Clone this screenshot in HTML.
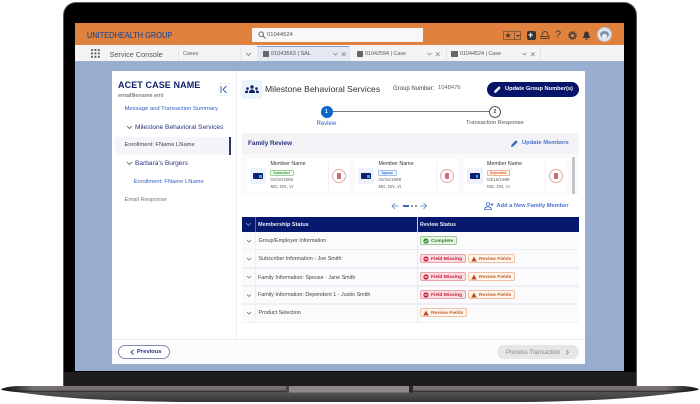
<!DOCTYPE html>
<html><head><meta charset="utf-8"><style>
*{box-sizing:border-box;margin:0;padding:0}
html,body{width:700px;height:404px;background:#fff;overflow:hidden;font-family:"Liberation Sans",sans-serif}
#w{position:relative;width:700px;height:404px;overflow:hidden;filter:blur(.3px)}
.a{position:absolute}
.t{position:absolute;white-space:nowrap;line-height:1}
.b{position:absolute;height:9px;border-radius:2px;font-size:4.900px;font-weight:700;line-height:9px;white-space:nowrap;padding-left:10px;border:1px solid}
.m{background:#fbdde2;border-color:#eba3ae;color:#c4203c}
.r{background:#fff6ef;border-color:#f0c0a0;color:#c2612a}
.c{background:#e9f6e6;border-color:#9acc99;color:#2f7d32}
.b svg{position:absolute;left:2px;top:.5px}
.row{position:absolute;left:242px;width:337px;height:17px;background:#fbfbfd}
.lab{position:absolute;left:258.500px;font-size:5.400px;color:#444;white-space:nowrap;line-height:1}
.card{position:absolute;top:158px;width:103px;height:35px;background:#fff;border-radius:2px}
.ic{position:absolute;left:3px;top:10px;width:16px;height:16px;background:#eff2fb;border-radius:2px}
.ic i{position:absolute;left:3px;top:5px;width:10px;height:6px;background:#0a1f6e;border-radius:1px}
.ic b{position:absolute;left:9px;top:6.500px;width:2.500px;height:3px;background:#3fa7d6}
.del{position:absolute;left:85px;top:11px;width:14px;height:14px;border-radius:50%;border:1px solid #e8a5ad;background:#fff}
.del i{position:absolute;left:4px;top:3px;width:4px;height:6px;background:#d06a77;border-radius:.5px}
.sep{position:absolute;left:81px;top:3px;width:1px;height:30px;background:#f1f1f4}
.tag{position:absolute;left:23px;top:12px;height:6px;border:1px solid;border-radius:1.500px;font-size:3.200px;line-height:4px;padding:0 2.500px;font-weight:700}
.n{left:23.500px;top:4px;font-size:5.300px;color:#333}
.d{left:23.500px;top:19.500px;font-size:4.500px;color:#666}
.e{left:23.500px;top:26.500px;font-size:4.500px;color:#666}
</style></head><body><div id="w">

<!-- laptop lid -->
<div class="a" style="left:63px;top:2px;width:574px;height:386px;background:#000;border-radius:13px 13px 0 0;border:1px solid #5a5b5f;border-bottom:0"></div>
<div class="a" style="left:64px;top:372px;width:572px;height:15px;background:#1f1c1e"></div>

<!-- base -->
<svg class="a" style="left:0;top:384px" width="700" height="20" viewBox="0 0 700 20">
<defs>
<linearGradient id="g" x1="0" x2="0" y1="0" y2="1"><stop offset="0" stop-color="#7a7677"/><stop offset=".26" stop-color="#716d6e"/><stop offset=".33" stop-color="#2c2a2b"/><stop offset=".4" stop-color="#565354"/><stop offset="1" stop-color="#363435"/></linearGradient>
<linearGradient id="l" x1="0" x2="1" y1="0" y2="0"><stop offset="0" stop-color="#111"/><stop offset=".4" stop-color="#1c1a1b" stop-opacity=".8"/><stop offset="1" stop-color="#1c1a1b" stop-opacity="0"/></linearGradient>
<linearGradient id="q" x1="1" x2="0" y1="0" y2="0"><stop offset="0" stop-color="#111"/><stop offset=".4" stop-color="#1c1a1b" stop-opacity=".8"/><stop offset="1" stop-color="#1c1a1b" stop-opacity="0"/></linearGradient>
</defs>
<path d="M1 5.500Q5 2.500 20 2H680Q695 2.500 699 5.500Q696 7 680 8.500Q620 17 520 18H180Q80 17 20 8.500Q4 7 1 5.500Z" fill="url(#g)"/>
<path d="M1 5.500Q5 2.500 20 2H34V8H20Q4 7 1 5.500Z" fill="url(#l)"/>
<path d="M699 5.500Q695 2.500 680 2H666V8H680Q696 7 699 5.500Z" fill="url(#q)"/>
<rect x="289" y="2" width="120" height="6.500" fill="#8e8a8b"/>
<rect x="286" y="2" width="3" height="6.500" fill="#4a4748"/>
<rect x="409" y="2" width="4" height="6.500" fill="#2a2729"/>
</svg>

<!-- screen -->
<div class="a" style="left:75px;top:23px;width:549px;height:348px;background:#98add0"></div>
<div class="a" style="left:75px;top:23px;width:549px;height:22px;background:#e0823d"></div>
<div class="t" style="left:87px;top:31px;font-size:8.600px;color:#2f4c8c;transform:scaleX(.86);transform-origin:0 0;text-shadow:0 0 .4px #2f4c8c">UNITEDHEALTH GROUP</div>
<div class="a" style="left:252px;top:28px;width:171px;height:14px;background:#f8f8f8;border-radius:1px"></div>
<svg class="a" style="left:258px;top:31px" width="8" height="8" viewBox="0 0 8 8" fill="none" stroke="#666"><circle cx="3.200" cy="3.200" r="2.300"/><path d="M5 5l2.500 2.500"/></svg>
<div class="t" style="left:267px;top:32px;font-size:5.800px;color:#555;margin-top:0.500px">01044524</div>

<!-- right header icons -->
<div class="a" style="left:503px;top:31px;width:18px;height:9px;border:1px solid #8b5a33;background:#e0823d"></div>
<div class="t" style="left:504.500px;top:31.500px;font-size:8px;color:#3a3a3a">★</div>
<div class="a" style="left:514px;top:31px;width:1px;height:9px;background:#8b5a33"></div>
<div class="a" style="left:516px;top:35px;border:2px solid transparent;border-top:2.500px solid #333"></div>
<div class="a" style="left:527px;top:31px;width:9px;height:9px;background:#333;border-radius:2px"></div>
<div class="t" style="left:528px;top:31px;font-size:9px;font-weight:700;color:#fff">+</div>
<svg class="a" style="left:540px;top:30px" width="10" height="10" viewBox="0 0 10 10" fill="none" stroke="#5a4430" stroke-width="1"><path d="M2 6C2 3 3 1.500 5 1.500S8 3 8 6"/><path d="M1 6.500H9V8.500H1z"/></svg>
<div class="t" style="left:555px;top:30px;font-size:11px;color:#4a3a2e">?</div>
<svg class="a" style="left:568px;top:31px" width="9" height="9" viewBox="0 0 9 9"><circle cx="4.500" cy="4.500" r="2.600" fill="none" stroke="#4a3a2e" stroke-width="1.600"/><circle cx="4.500" cy="4.500" r="4" fill="none" stroke="#4a3a2e" stroke-width="1" stroke-dasharray="1.300 1.200"/></svg>
<svg class="a" style="left:581.500px;top:31px" width="9" height="9" viewBox="0 0 9 9" fill="#3f3530"><path d="M4.500.5C6.500.5 7 2.500 7 4c0 1.500 1 2 1.500 3H.5C1 6 2 5.500 2 4 2 2.500 2.500.5 4.500.5z"/><rect x="3.500" y="7.500" width="2" height="1.300"/></svg>
<div class="a" style="left:597px;top:27px;width:15px;height:15px;border-radius:50%;background:#dfe6f0;border:1px solid #b8c6da"></div>
<div class="a" style="left:600px;top:31px;width:9px;height:7px;border-radius:50%;background:#7f90a8"></div>
<div class="a" style="left:602px;top:34px;width:5px;height:3.500px;border-radius:50%;background:#eef1f5"></div>

<!-- tab bar -->
<div class="a" style="left:75px;top:45px;width:549px;height:16px;background:#f4f4f6"></div>
<div class="a" style="left:91px;top:49px;width:9px;height:9px;background-image:radial-gradient(circle at 1px 1px,#555 1px,transparent 1.100px);background-size:3.400px 3.400px"></div>
<div class="t" style="left:109.500px;top:50.500px;font-size:7.300px;color:#555">Service Console</div>
<div class="a" style="left:178px;top:46px;width:1px;height:15px;background:#e8e8ea"></div>
<div class="t" style="left:183px;top:52px;font-size:5.400px;color:#666">Cases</div>
<div class="a" style="left:240px;top:46px;width:1px;height:15px;background:#e8e8ea"></div>
<svg class="a" style="left:245px;top:52px" width="7" height="5" fill="none" stroke="#777" stroke-width=".8"><path d="M1 1l2.500 2.500L6 1"/></svg>
<div class="a" style="left:257px;top:46px;width:92px;height:15px;background:#e3e8f2;border-top:1.500px solid #7f9bd2"></div>
<div class="a" style="left:349px;top:46px;width:1px;height:15px;background:#e4e4e8"></div>
<div class="a" style="left:446px;top:46px;width:1px;height:15px;background:#e4e4e8"></div>
<div class="a" style="left:540px;top:46px;width:1px;height:15px;background:#e4e4e8"></div>
<div class="a" style="left:263px;top:51px;width:6px;height:6px;background:#666;border-radius:.5px"></div>
<div class="t" style="left:271px;top:52px;font-size:5.600px;color:#555">01043563 | SAL</div>
<svg class="a" style="left:333px;top:52px" width="14" height="5" fill="none" stroke="#777" stroke-width=".7"><path d="M.5 1l2 2 2-2M9 .5l3.500 3.500M12.500 .5L9 4"/></svg>
<div class="a" style="left:357px;top:51px;width:6px;height:6px;background:#666;border-radius:.5px"></div>
<div class="t" style="left:365px;top:52px;font-size:5.400px;color:#555">01042594 | Case</div>
<svg class="a" style="left:427px;top:52px" width="14" height="5" fill="none" stroke="#777" stroke-width=".7"><path d="M.5 1l2 2 2-2M9 .5l3.500 3.500M12.500 .5L9 4"/></svg>
<div class="a" style="left:451px;top:51px;width:7px;height:6px;background:#666;border-radius:.5px"></div>
<div class="t" style="left:460px;top:52px;font-size:5.400px;color:#555">01044524 | Case</div>
<svg class="a" style="left:522px;top:52px" width="14" height="5" fill="none" stroke="#777" stroke-width=".7"><path d="M.5 1l2 2 2-2M9 .5l3.500 3.500M12.500 .5L9 4"/></svg>

<!-- main card -->
<div class="a" style="left:112px;top:71px;width:473px;height:293px;background:#fff;border-radius:1px"></div>
<div class="a" style="left:112px;top:339px;width:473px;height:25px;background:#fcfcfe;border-top:1px solid #eeeef3"></div>
<div class="a" style="left:236px;top:71px;width:1px;height:268px;background:#f0f0f4"></div>

<!-- sidebar -->
<div class="t" style="left:118px;top:81px;font-size:9px;font-weight:700;color:#0f1f6b;letter-spacing:.1px">ACET CASE NAME</div>
<div class="t" style="left:118px;top:94px;font-size:5.600px;color:#555">emailfilename.eml</div>
<div class="a" style="left:218px;top:83px;width:12px;height:13px;border:1px solid #eef0f6;background:#fff"></div>
<svg class="a" style="left:220px;top:85px" width="8" height="9" fill="none" stroke="#2b57b0" stroke-width=".9"><path d="M1 1v7M6.500 1L3 4.500 6.500 8"/></svg>
<div class="t" style="left:124.500px;top:107px;font-size:5.850px;color:#2f5fc4">Message and Transaction Summary</div>
<svg class="a" style="left:126px;top:125px" width="7" height="5" fill="none" stroke="#555" stroke-width=".8"><path d="M1 1l2.500 2.500L6 1"/></svg>
<div class="t" style="left:135px;top:124.500px;font-size:6.600px;color:#27337d">Milestone Behavioral Services</div>
<div class="a" style="left:115px;top:137px;width:115px;height:18px;background:#f3f5fb"></div>
<div class="a" style="left:229px;top:137px;width:2px;height:18px;background:#2a3570"></div>
<div class="t" style="left:124.500px;top:143px;font-size:5.800px;color:#444">Enrollment: FName LName</div>
<svg class="a" style="left:126px;top:161px" width="7" height="5" fill="none" stroke="#555" stroke-width=".8"><path d="M1 1l2.500 2.500L6 1"/></svg>
<div class="t" style="left:135px;top:161px;font-size:6.600px;color:#27337d">Barbara's Burgers</div>
<div class="t" style="left:133.500px;top:179.500px;font-size:5.800px;color:#2f5fc4">Enrollment: FName LName</div>
<div class="t" style="left:124.500px;top:198px;font-size:5.800px;color:#777">Email Response</div>

<!-- heading -->
<div class="a" style="left:242px;top:80px;width:20px;height:19px;background:#e8f3fa;border-radius:2px"></div>
<svg class="a" style="left:245px;top:85px" width="14" height="9" viewBox="0 0 14 9" fill="#0f1f6b"><circle cx="7" cy="2" r="1.700"/><path d="M4 8c0-2.500 1.500-3.500 3-3.500S10 5.500 10 8z"/><circle cx="2.500" cy="3.500" r="1.300"/><circle cx="11.500" cy="3.500" r="1.300"/><path d="M0 8c0-2 1-2.800 2.500-2.800L3.300 8zM14 8c0-2-1-2.800-2.500-2.800L10.700 8z"/></svg>
<div class="t" style="left:265px;top:85px;font-size:8.600px;color:#333">Milestone Behavioral Services</div>
<div class="t" style="left:393px;top:86px;font-size:6px;color:#444">Group Number:</div>
<div class="t" style="left:438px;top:86px;font-size:5.800px;color:#666">1048476</div>
<div class="a" style="left:487px;top:82px;width:92px;height:15px;border-radius:8px;background:#06146a"></div>
<svg class="a" style="left:493px;top:85px" width="9" height="9" fill="#fff"><path d="M1 8l.5-2.200L6 1.300 7.700 3 3.200 7.500z"/></svg>
<div class="t" style="left:505px;top:87px;font-size:5.700px;font-weight:700;color:#fff">Update Group Number(s)</div>

<!-- stepper -->
<div class="a" style="left:332px;top:111px;width:158px;height:1px;background:#777"></div>
<div class="a" style="left:320.500px;top:105.500px;width:12px;height:12px;border-radius:50%;background:#0a66c8"></div>
<div class="t" style="left:325px;top:109.500px;font-size:5px;font-weight:700;color:#fff">1</div>
<div class="t" style="left:316.500px;top:120.500px;font-size:6px;color:#2f5fc4">Review</div>
<div class="a" style="left:489px;top:105.500px;width:12px;height:12px;border-radius:50%;background:#fff;border:1px solid #555"></div>
<div class="t" style="left:493.500px;top:109.500px;font-size:5px;font-weight:700;color:#444">2</div>
<div class="t" style="left:466px;top:120.500px;font-size:5.800px;color:#555">Transaction Response</div>

<!-- family review -->
<div class="a" style="left:242px;top:133px;width:337px;height:21px;background:#f3f2f6;border-radius:3px 3px 0 0"></div>
<div class="t" style="left:248px;top:141px;font-size:6.400px;font-weight:700;color:#27337d">Family Review</div>
<svg class="a" style="left:510px;top:139px" width="9" height="9" fill="#3a67c4"><path d="M1 8l.5-2.200L6 1.300 7.700 3 3.200 7.500z"/></svg>
<div class="t" style="left:522px;top:141px;font-size:5.800px;font-weight:700;color:#3a67c4;opacity:.9">Update Members</div>
<div class="a" style="left:242px;top:154px;width:337px;height:41px;background:#fafafc"></div>
<div class="a" style="left:572px;top:157px;width:3px;height:37px;background:#c5c5c9"></div>

<div class="card" style="left:247px">
<div class="ic"><i></i><b></b></div>
<div class="t n">Member Name</div>
<div class="tag" style="color:#3a9a3a;border-color:#9ad09a;background:#f4fbf2">Subscriber</div>
<div class="t d">03/16/1998</div>
<div class="t e">MD, DN, VI</div>
<div class="sep"></div><div class="del"><i></i></div>
</div>
<div class="card" style="left:355px">
<div class="ic"><i></i><b></b></div>
<div class="t n">Member Name</div>
<div class="tag" style="color:#2f6fd0;border-color:#9dbdee;background:#f2f7ff">Spouse</div>
<div class="t d">03/16/1998</div>
<div class="t e">MD, DN, VI</div>
<div class="sep"></div><div class="del"><i></i></div>
</div>
<div class="card" style="left:463.500px">
<div class="ic"><i></i><b></b></div>
<div class="t n">Member Name</div>
<div class="tag" style="color:#d4622c;border-color:#edb390;background:#fff6f0">Dependent</div>
<div class="t d">03/16/1998</div>
<div class="t e">MD, DN, VI</div>
<div class="sep"></div><div class="del"><i></i></div>
</div>

<!-- pagination -->
<svg class="a" style="left:391px;top:202px" width="40" height="8" fill="none" stroke="#5a82d0" stroke-width=".8"><path d="M7.500 4H1M4 1L1 4l3 3M29 4h6.500M32.500 1l3 3-3 3"/><rect x="12" y="3" width="6" height="2" fill="#3a67c4" stroke="none"/><circle cx="21" cy="4" r="1" fill="#777" stroke="none"/><circle cx="25" cy="4" r="1" fill="#777" stroke="none"/></svg>
<svg class="a" style="left:484px;top:202px" width="10" height="8" fill="none" stroke="#3a67c4" stroke-width=".8"><circle cx="4" cy="2.200" r="1.700"/><path d="M.5 7.500C.5 5.500 2 4.800 4 4.800s3.500.7 3.500 2.700zM8 1v3M6.500 2.500h3"/></svg>
<div class="t" style="left:496.500px;top:204px;font-size:5.700px;font-weight:700;color:#3a67c4;opacity:.9">Add a New Family Member</div>

<!-- table -->
<div class="a" style="left:242px;top:217px;width:337px;height:15px;background:#06196e"></div>
<div class="a" style="left:255px;top:217px;width:1px;height:15px;background:#5d6aa5"></div>
<div class="a" style="left:417px;top:217px;width:1px;height:15px;background:#c8cde0"></div>
<svg class="a" style="left:245px;top:222px" width="7" height="5" fill="none" stroke="#8890b8" stroke-width=".8"><path d="M1 1l2.500 2.500L6 1"/></svg>
<div class="t" style="left:258px;top:222.500px;font-size:5.500px;font-weight:700;color:#e8eaf5">Membership Status</div>
<div class="t" style="left:420px;top:222.500px;font-size:5.300px;font-weight:700;color:#e8eaf5">Review Status</div>

<div class="row" style="top:232px"></div>
<div class="row" style="top:250px"></div>
<div class="row" style="top:268px"></div>
<div class="row" style="top:286px"></div>
<div class="row" style="top:304px"></div>
<div class="a" style="left:242px;top:249px;width:337px;height:1px;background:#f0f0f4"></div>
<div class="a" style="left:242px;top:267px;width:337px;height:1.500px;background:#efeff3"></div>
<div class="a" style="left:242px;top:285px;width:337px;height:1.500px;background:#efeff3"></div>
<div class="a" style="left:242px;top:303px;width:337px;height:1.500px;background:#efeff3"></div>
<div class="a" style="left:242px;top:322px;width:337px;height:1px;background:#f0f0f4"></div>
<div class="a" style="left:255px;top:232px;width:1px;height:90px;background:#eeeef2"></div>
<div class="a" style="left:417px;top:232px;width:1px;height:90px;background:#e8e8ee"></div>

<svg class="a" style="left:246px;top:239px" width="7" height="84" fill="none" stroke="#666" stroke-width=".7"><path d="M1 1l2 2 2-2M1 19l2 2 2-2M1 37l2 2 2-2M1 55.500l2 2 2-2M1 73l2 2 2-2"/></svg>
<div class="lab" style="top:239px">Group/Employer Information</div>
<div class="lab" style="top:257px">Subscriber Information - Joe Smith</div>
<div class="lab" style="top:275.500px;left:258px">Family Information: Spouse -  Jane Smith</div>
<div class="lab" style="top:293px;left:258px">Family Information: Dependent 1 -  Justin Smith</div>
<div class="lab" style="top:311px">Product Selection</div>

<div class="b c" style="left:420px;top:236px;width:37px"><svg width="6" height="6"><circle cx="3" cy="3" r="2.600" fill="#2e8b3a"/><path d="M1.500 3l1 1 2-2" stroke="#fff" stroke-width=".7" fill="none"/></svg>Complete</div>

<div class="b m" style="left:420px;top:254px;width:46px"><svg width="6" height="6"><circle cx="3" cy="3" r="2.600" fill="#c4203c"/><rect x="1.400" y="2.500" width="3.200" height="1" fill="#fff"/></svg>Field Missing</div>
<div class="b r" style="left:468px;top:254px;width:47px"><svg width="6" height="6"><path d="M3 .5L5.800 5.500H.2z" fill="#c2501a"/></svg>Review Fields</div>

<div class="b m" style="left:420px;top:272px;width:46px"><svg width="6" height="6"><circle cx="3" cy="3" r="2.600" fill="#c4203c"/><rect x="1.400" y="2.500" width="3.200" height="1" fill="#fff"/></svg>Field Missing</div>
<div class="b r" style="left:468px;top:272px;width:47px"><svg width="6" height="6"><path d="M3 .5L5.800 5.500H.2z" fill="#c2501a"/></svg>Review Fields</div>

<div class="b m" style="left:420px;top:290px;width:46px"><svg width="6" height="6"><circle cx="3" cy="3" r="2.600" fill="#c4203c"/><rect x="1.400" y="2.500" width="3.200" height="1" fill="#fff"/></svg>Field Missing</div>
<div class="b r" style="left:468px;top:290px;width:47px"><svg width="6" height="6"><path d="M3 .5L5.800 5.500H.2z" fill="#c2501a"/></svg>Review Fields</div>

<div class="b r" style="left:420px;top:308px;width:47px"><svg width="6" height="6"><path d="M3 .5L5.800 5.500H.2z" fill="#c2501a"/></svg>Review Fields</div>

<!-- footer -->
<div class="a" style="left:118px;top:344.500px;width:52px;height:14px;border-radius:7px;border:1px solid #8089b5;background:#fff"></div>
<svg class="a" style="left:130px;top:349px" width="5" height="7" fill="none" stroke="#27337d" stroke-width=".9"><path d="M3.500 1L1 3.200l2.500 2.300"/></svg>
<div class="t" style="left:137px;top:349.500px;font-size:5.800px;font-weight:700;color:#27337d">Previous</div>
<div class="a" style="left:497px;top:345px;width:82px;height:13.500px;border-radius:7px;background:#e6e6e9"></div>
<div class="t" style="left:506px;top:349.500px;font-size:6px;color:#85858a">Process Transaction</div>
<svg class="a" style="left:564.500px;top:349px" width="5" height="7" fill="none" stroke="#85858a" stroke-width=".8"><path d="M1 1l2.500 2.200L1 5.500"/></svg>

</div></body></html>
